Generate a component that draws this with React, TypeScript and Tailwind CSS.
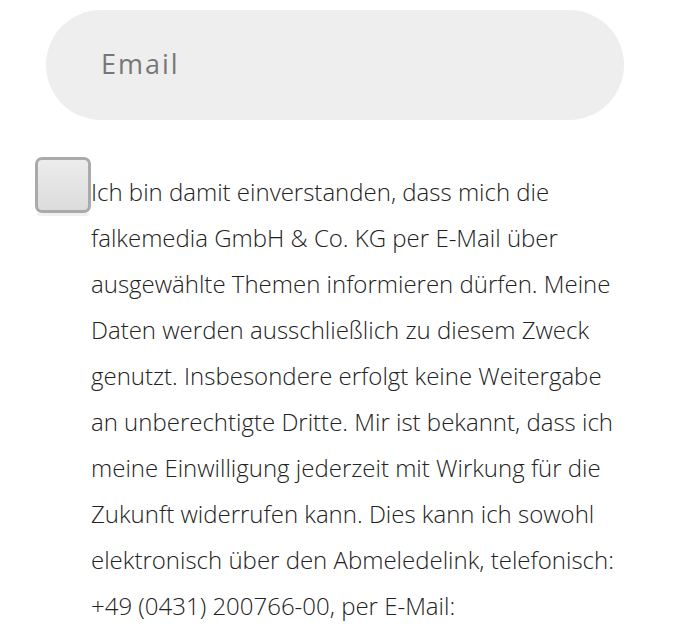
import React from "react";

export default function App() {
  return (
    <div className="w-[684px] h-[637px] overflow-hidden bg-white pt-[10px]" style={{ fontFamily: '"Open Sans", sans-serif' }}>
      <div className="ml-[46px] w-[578px] h-[110px] rounded-full bg-[#eeeeee] flex items-center pl-[55px]">
        <span className="text-[27px] tracking-[2px] text-[#777777] leading-none mb-[4px]">Email</span>
      </div>
      <div className="mt-[37px] ml-[35px] flex items-start">
        <div className="shrink-0 w-[56px] h-[59px] flex flex-col">
          <div className="w-[56px] h-[56px] rounded-[7px] border-[3px] border-[#aaaaaa] bg-gradient-to-b from-[#ececec] to-[#dcdcdc]" />
          <div className="mx-[2px] h-[3px] bg-[#f0f0f0] rounded-b-[4px]" />
        </div>
        <p className="mt-[12px] w-[533px] text-[24px] leading-[46px] font-light text-[#222222]">
          Ich bin damit einverstanden, dass mich die falkemedia GmbH &amp; Co. KG per E-Mail über ausgewählte Themen informieren dürfen. Meine Daten werden ausschließlich zu diesem Zweck genutzt. Insbesondere erfolgt keine Weitergabe an unberechtigte Dritte. Mir ist bekannt, dass ich meine Einwilligung jederzeit mit Wirkung für die Zukunft widerrufen kann. Dies kann ich sowohl elektronisch über den Abmeledelink, telefonisch: +49 (0431) 200766-00, per E-Mail:
        </p>
      </div>
    </div>
  );
}
